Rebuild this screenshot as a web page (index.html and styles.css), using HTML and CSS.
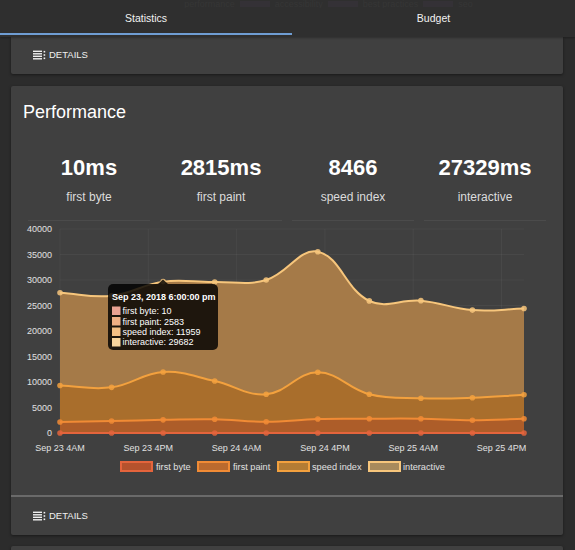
FILE: index.html
```html
<!DOCTYPE html>
<html>
<head>
<meta charset="utf-8">
<title>Statistics</title>
<link rel="stylesheet" href="styles.css">
</head>
<body>
<div class="tabbar">
  <div class="ghost">
    <span>performance</span><i class="gbox"></i><span>accessibility</span><i class="gbox"></i><span>best practices</span><i class="gbox"></i><span>seo</span>
  </div>
  <div class="tabs">
    <div class="tab active">Statistics</div>
    <div class="tab">Budget</div>
  </div>
</div>

<div class="page">
  <div class="card card-top">
    <div class="footer">
      <svg class="list-icon" width="13" height="10" viewBox="0 0 13 10"><rect x="0" y="0.6" width="9" height="1.4"/><rect x="0" y="3.1" width="9" height="1.4"/><rect x="0" y="5.6" width="9" height="1.4"/><rect x="0" y="8.1" width="9" height="1.4"/><rect x="10.6" y="0.9" width="1.6" height="1.6"/><rect x="10.6" y="4.2" width="1.6" height="1.6"/><rect x="10.6" y="7.5" width="1.6" height="1.6"/></svg>
      <span>DETAILS</span>
    </div>
  </div>

  <div class="card">
    <div class="card-body">
      <h2 class="title">Performance</h2>
      <div class="stats">
        <div class="stat"><div class="value">10ms</div><div class="label">first byte</div></div>
        <div class="stat"><div class="value">2815ms</div><div class="label">first paint</div></div>
        <div class="stat"><div class="value">8466</div><div class="label">speed index</div></div>
        <div class="stat"><div class="value">27329ms</div><div class="label">interactive</div></div>
      </div>
      <svg class="chart" width="528" height="262" viewBox="0 0 528 262">
        <g class="grid">
          <line x1="37" y1="8" x2="501" y2="8"/>
          <line x1="37" y1="33.5" x2="501" y2="33.5"/>
          <line x1="37" y1="59" x2="501" y2="59"/>
          <line x1="37" y1="84.5" x2="501" y2="84.5"/>
          <line x1="37" y1="110" x2="501" y2="110"/>
          <line x1="37" y1="135.5" x2="501" y2="135.5"/>
          <line x1="37" y1="161" x2="501" y2="161"/>
          <line x1="37" y1="186.5" x2="501" y2="186.5"/>
          <line x1="37" y1="212" x2="501" y2="212"/>
          <line x1="37" y1="8" x2="37" y2="212"/>
          <line x1="125.3" y1="8" x2="125.3" y2="212"/>
          <line x1="213.6" y1="8" x2="213.6" y2="212"/>
          <line x1="301.9" y1="8" x2="301.9" y2="212"/>
          <line x1="390.2" y1="8" x2="390.2" y2="212"/>
          <line x1="478.5" y1="8" x2="478.5" y2="212"/>
        </g>
        <g class="ylab">
          <text x="29" y="11.2">40000</text>
          <text x="29" y="36.7">35000</text>
          <text x="29" y="62.2">30000</text>
          <text x="29" y="87.7">25000</text>
          <text x="29" y="113.2">20000</text>
          <text x="29" y="138.7">15000</text>
          <text x="29" y="164.2">10000</text>
          <text x="29" y="189.7">5000</text>
          <text x="29" y="215.2">0</text>
        </g>
        <g class="xlab">
          <text x="37" y="229.5">Sep 23 4AM</text>
          <text x="125.3" y="229.5">Sep 23 4PM</text>
          <text x="213.6" y="229.5">Sep 24 4AM</text>
          <text x="301.9" y="229.5">Sep 24 4PM</text>
          <text x="390.2" y="229.5">Sep 25 4AM</text>
          <text x="478.5" y="229.5">Sep 25 4PM</text>
        </g>
        <g id="plot"></g>
        <g class="legend">
          <rect x="98" y="241" width="31" height="9" fill="#b5522d" stroke="#e4643c" stroke-width="2"/>
          <text x="133" y="249">first byte</text>
          <rect x="175" y="241" width="31" height="9" fill="#bb6a2e" stroke="#f18b35" stroke-width="2"/>
          <text x="210" y="249">first paint</text>
          <rect x="255" y="241" width="31" height="9" fill="#b47c34" stroke="#f3a13e" stroke-width="2"/>
          <text x="289" y="249">speed index</text>
          <rect x="346" y="241" width="31" height="9" fill="#a88a5c" stroke="#f7c67c" stroke-width="2"/>
          <text x="380" y="249">interactive</text>
        </g>
        <g class="tooltip">
          <path d="M135 63 L140 58.5 L145 63 Z" fill="rgba(0,0,0,0.82)"/>
          <rect x="85" y="63" width="110" height="66" rx="5" fill="rgba(0,0,0,0.82)"/>
          <text class="tt-title" x="89" y="79.2">Sep 23, 2018 6:00:00 pm</text>
          <rect x="89" y="85.5" width="8.5" height="8.5" fill="#eba291"/>
          <text x="99.5" y="93">first byte: 10</text>
          <rect x="89" y="96" width="8.5" height="8.5" fill="#f1b084"/>
          <text x="99.5" y="103.5">first paint: 2583</text>
          <rect x="89" y="106.5" width="8.5" height="8.5" fill="#f5c084"/>
          <text x="99.5" y="114">speed index: 11959</text>
          <rect x="89" y="117" width="8.5" height="8.5" fill="#f9d49c"/>
          <text x="99.5" y="124.3">interactive: 29682</text>
        </g>
      </svg>
    </div>
    <div class="footer sep">
      <svg class="list-icon" width="13" height="10" viewBox="0 0 13 10"><rect x="0" y="0.6" width="9" height="1.4"/><rect x="0" y="3.1" width="9" height="1.4"/><rect x="0" y="5.6" width="9" height="1.4"/><rect x="0" y="8.1" width="9" height="1.4"/><rect x="10.6" y="0.9" width="1.6" height="1.6"/><rect x="10.6" y="4.2" width="1.6" height="1.6"/><rect x="10.6" y="7.5" width="1.6" height="1.6"/></svg>
      <span>DETAILS</span>
    </div>
  </div>

  <div class="card card-bottom"></div>
</div>
<script src="script.js"></script>
</body>
</html>
```

FILE: styles.css
```css
html, body {
  margin: 0;
  padding: 0;
  overflow: hidden;
}
body {
  background: #2c2c2c;
  font-family: "Liberation Sans", Arial, sans-serif;
  color: #fff;
  width: 575px;
  height: 550px;
}
.tabbar {
  background: #2f2f2f;
  height: 37px;
  display: flex;
  flex-direction: column;
  box-shadow: 0 1px 2px rgba(0,0,0,0.3);
  position: relative;
  z-index: 2;
}
.ghost {
  height: 8px;
  overflow: hidden;
  display: flex;
  justify-content: center;
  align-items: center;
  gap: 5px;
  padding-left: 82px;
  font-size: 9px;
  line-height: 4px;
  color: #363636;
}
.gbox {
  display: block;
  width: 30px;
  height: 6px;
  background: #343136;
}
.tabs {
  display: flex;
}
.tab {
  flex: 1;
  text-align: center;
  font-size: 10.5px;
  line-height: 14px;
  padding: 3px 0 8px;
  color: #f2f2f2;
  border-bottom: 2px solid transparent;
}
.tab.active {
  flex: 0 0 292px;
  border-bottom-color: #6f9dd3;
}
.page {
  padding: 0 12px 0 11px;
}
.card {
  background: #404040;
  border-radius: 2px;
  box-shadow: 0 1px 3px rgba(0,0,0,0.45);
  margin-top: 12px;
}
.card-top {
  margin-top: 0;
  border-radius: 0 0 2px 2px;
}
.card-bottom {
  margin-top: 11px;
  height: 20px;
}
.footer {
  display: flex;
  align-items: center;
  gap: 3px;
  padding: 10px 22px 11px;
  line-height: 16px;
  font-size: 9.5px;
  color: #f0f0f0;
}
.footer.sep {
  border-top: 2px solid #6a6a6a;
  padding-top: 11px;
}
.list-icon {
  fill: #f0f0f0;
  display: block;
}
.card-body {
  padding: 15px 12px 12px;
}
.title {
  margin: 0;
  font-size: 18px;
  line-height: 22px;
  font-weight: normal;
  color: #fff;
}
.stats {
  display: grid;
  grid-template-columns: repeat(4, 1fr);
}
.stat {
  margin: 0 5px;
  padding: 32px 0 15px;
  border-bottom: 1px solid #4b4b4b;
  text-align: center;
}
.value {
  font-size: 22px;
  line-height: 26px;
  font-weight: bold;
  color: #fff;
}
.label {
  margin-top: 8px;
  font-size: 12px;
  line-height: 16px;
  color: #dcdcdc;
}
.chart {
  display: block;
}
.grid line {
  stroke: rgba(255,255,255,0.045);
  stroke-width: 1;
}
.ylab text {
  font-family: "Liberation Sans", Arial, sans-serif;
  font-size: 9px;
  fill: #e0e0e0;
  text-anchor: end;
}
.xlab text {
  font-family: "Liberation Sans", Arial, sans-serif;
  font-size: 9px;
  fill: #e0e0e0;
  text-anchor: middle;
}
.legend text {
  font-family: "Liberation Sans", Arial, sans-serif;
  font-size: 9.2px;
  fill: #e0e0e0;
}
.tooltip text {
  font-family: "Liberation Sans", Arial, sans-serif;
  font-size: 9px;
  fill: #fff;
}
.tooltip .tt-title {
  font-weight: bold;
}
```

FILE: script.js
```js
(function () {
  var NS = 'http://www.w3.org/2000/svg';
  var plot = document.getElementById('plot');
  var xs = [37, 88.6, 140.1, 191.7, 243.2, 294.8, 346.3, 397.9, 449.4, 501];
  function yOf(v) { return 212 - v * 0.0051; }
  var sets = [
    { vals: [27500, 26900, 29682, 29600, 30000, 35550, 25900, 25950, 24100, 24400], fill: '#a57a48', line: '#f7c67c' },
    { vals: [9300, 8950, 11959, 10200, 7600, 11900, 7600, 6800, 6900, 7500], fill: '#a96e2c', line: '#f3a13e' },
    { vals: [2150, 2350, 2583, 2700, 2200, 2750, 2800, 2800, 2500, 2800], fill: '#ad5d29', line: '#f18b35' },
    { vals: [10, 10, 10, 10, 10, 10, 10, 10, 10, 10], fill: '#b5522d', line: '#e4643c' }
  ];
  function curve(vals) {
    var pts = vals.map(function (v, i) { return { x: xs[i], y: yOf(v) }; });
    var t = 0.4;
    var cp = pts.map(function (p, i) {
      var p0 = pts[i - 1] || p, p2 = pts[i + 1] || p;
      var d01 = Math.hypot(p.x - p0.x, p.y - p0.y);
      var d12 = Math.hypot(p2.x - p.x, p2.y - p.y);
      var s01 = d01 / (d01 + d12), s12 = d12 / (d01 + d12);
      if (isNaN(s01)) s01 = 0;
      if (isNaN(s12)) s12 = 0;
      var fa = t * s01, fb = t * s12;
      return {
        px: p.x - fa * (p2.x - p0.x), py: p.y - fa * (p2.y - p0.y),
        nx: p.x + fb * (p2.x - p0.x), ny: p.y + fb * (p2.y - p0.y)
      };
    });
    var d = 'M' + pts[0].x + ',' + pts[0].y;
    for (var i = 1; i < pts.length; i++) {
      d += ' C' + cp[i - 1].nx.toFixed(2) + ',' + cp[i - 1].ny.toFixed(2) + ' ' +
        cp[i].px.toFixed(2) + ',' + cp[i].py.toFixed(2) + ' ' + pts[i].x + ',' + pts[i].y.toFixed(2);
    }
    return { d: d, pts: pts };
  }
  function el(name, attrs) {
    var e = document.createElementNS(NS, name);
    for (var k in attrs) e.setAttribute(k, attrs[k]);
    return e;
  }
  sets.forEach(function (s) {
    var c = curve(s.vals);
    var last = c.pts[c.pts.length - 1], first = c.pts[0];
    plot.appendChild(el('path', {
      d: c.d + ' L' + last.x + ',212 L' + first.x + ',212 Z',
      fill: s.fill
    }));
    plot.appendChild(el('path', {
      d: c.d, fill: 'none', stroke: s.line, 'stroke-width': 2
    }));
    c.pts.forEach(function (p) {
      plot.appendChild(el('circle', {
        cx: p.x, cy: p.y, r: 2.8, fill: s.line, 'fill-opacity': 0.85
      }));
    });
  });
})();
```
